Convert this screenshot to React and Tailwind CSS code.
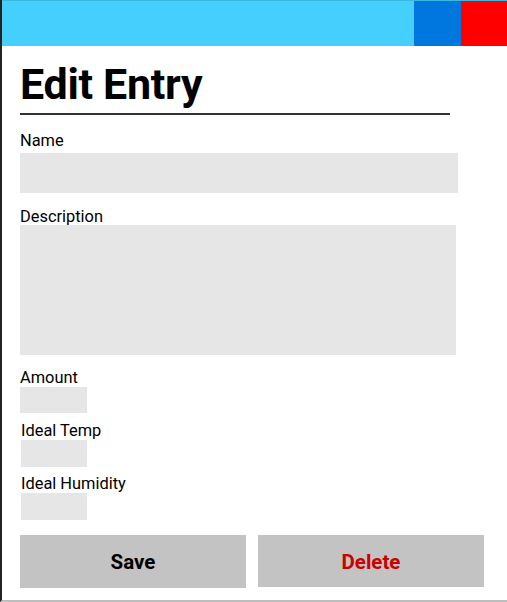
export default function App() {
    const font = { fontFamily: "Roboto, 'Liberation Sans', sans-serif" };

    return (
        <div
            className="w-[507px] h-[602px] bg-white border-l-2 border-l-[#222] border-b-2 border-b-[#bdbdbd] flex flex-col"
            style={font}
        >
            {/* TOP BAR */}
            <div className="flex h-[46px] border-t border-t-[#3bb8e0]">
                <div className="flex-1 bg-[#44cffc]" />
                <div className="w-[47px] bg-[#0077de]" />
                <div className="w-[46px] bg-[#ff0000]" />
            </div>

            <div className="pl-[18px]">
                <h1 className="mt-[14px] text-[43px] leading-[48px] font-bold text-black tracking-[-0.3px]">
                    Edit Entry
                </h1>
                <div className="mt-[5px] w-[430px] h-[2px] bg-[#333]" />

                <label className="block mt-[16px] text-[16.4px] leading-[19px] text-black">Name</label>
                <div className="mt-[3px] w-[438px] h-[40px] bg-[#e6e6e6]" />

                <label className="block mt-[14px] text-[16.4px] leading-[19px] text-black">Description</label>
                <div className="mt-[-1px] w-[436px] h-[130px] bg-[#e6e6e6]" />

                <label className="block mt-[13px] text-[16.4px] leading-[19px] text-black">Amount</label>
                <div className="w-[67px] h-[26px] bg-[#e6e6e6]" />

                <div className="pl-[1px]">
                    <label className="block mt-[8px] text-[16.4px] leading-[19px] text-black">Ideal Temp</label>
                    <div className="w-[66px] h-[27px] bg-[#e6e6e6]" />

                    <label className="block mt-[7px] text-[16.4px] leading-[19px] text-black">Ideal Humidity</label>
                    <div className="w-[66px] h-[27px] bg-[#e6e6e6]" />
                </div>

                <div className="mt-[15px] flex gap-[12px]">
                    <button className="w-[226px] h-[53px] pt-[2px] bg-[#c3c3c3] text-[20.5px] font-bold text-black">
                        Save
                    </button>
                    <button className="w-[226px] h-[52px] pt-[2px] bg-[#c3c3c3] text-[20.5px] font-bold text-[#cc0000]">
                        Delete
                    </button>
                </div>
            </div>
        </div>
    );
}
